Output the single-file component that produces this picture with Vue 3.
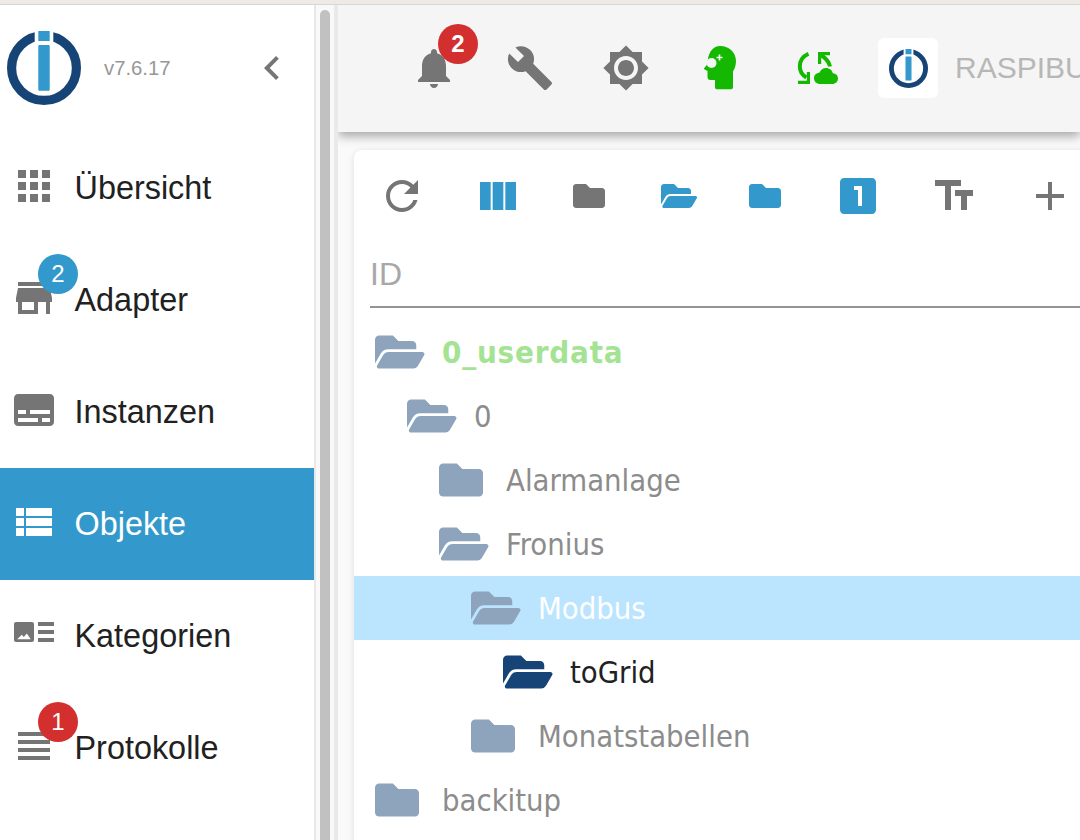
<script setup>
const nav = [
  { label: 'Übersicht', d: 'M4 8h4V4H4v4zm6 12h4v-4h-4v4zm-6 0h4v-4H4v4zm0-6h4v-4H4v4zm6 0h4v-4h-4v4zm6-10v4h4V4h-4zm-6 4h4V4h-4v4zm6 6h4v-4h-4v4zm0 6h4v-4h-4v4z' },
  { label: 'Adapter', badge: '2', tone: 'blue', d: 'M20 4H4v2h16V4zm1 10v-2l-1-5H4l-1 5v2h1v6h10v-6h4v6h2v-6h1zm-9 4H6v-4h6v4z' },
  { label: 'Instanzen', d: 'M20 4H4c-1.1 0-2 .9-2 2v12c0 1.1.9 2 2 2h16c1.1 0 2-.9 2-2V6c0-1.1-.9-2-2-2zM4 12h4v2H4v-2zm10 6H4v-2h10v2zm6 0h-4v-2h4v2zm0-4H10v-2h10v2z' },
  { label: 'Objekte', active: true, d: 'M3 14h4v-4H3v4zm0 5h4v-4H3v4zM3 9h4V5H3v4zm5 5h13v-4H8v4zm0 5h13v-4H8v4zM8 5v4h13V5H8z' },
  { label: 'Kategorien', d: 'M3 6h8a1 1 0 0 1 1 1v8a1 1 0 0 1-1 1H3a1 1 0 0 1-1-1V7a1 1 0 0 1 1-1zm.6 8.6h6.8l-2-2.8-1.5 1.7-1-1.1zM14 6h8v2h-8zm0 4h8v2h-8zm0 4h8v2h-8z' },
  { label: 'Protokolle', badge: '1', tone: 'red', d: 'M4 15h16v-2H4v2zm0 4h16v-2H4v2zm0-8h16V9H4v2zm0-6v2h16V5H4z' },
]
const closed = 'M464 128H272l-64-64H48C21.49 64 0 85.49 0 112v288c0 26.51 21.49 48 48 48h416c26.51 0 48-21.49 48-48V176c0-26.51-21.49-48-48-48z'
const open = 'M572.694 292.093L500.27 416.248A63.997 63.997 0 0 1 444.989 448H45.025c-18.523 0-30.064-20.093-20.731-36.093l72.424-124.155A64 64 0 0 1 152 256h399.964c18.523 0 30.064 20.093 20.73 36.093zM152 224h328v-48c0-26.51-21.49-48-48-48H272l-64-64H48C21.49 64 0 85.49 0 112v278.046l69.077-118.418C86.214 242.25 117.989 224 152 224z'
const tree = [
  { name: '0_userdata', level: 0, open: true, kind: 'root' },
  { name: '0', level: 1, open: true },
  { name: 'Alarmanlage', level: 2 },
  { name: 'Fronius', level: 2, open: true },
  { name: 'Modbus', level: 3, open: true, kind: 'selected' },
  { name: 'toGrid', level: 4, open: true, kind: 'leaf' },
  { name: 'Monatstabellen', level: 3 },
  { name: 'backitup', level: 0 },
]
</script>

<template>
  <div class="screen">
    <div class="strip"></div>
    <div class="main">
      <aside class="sidebar">
        <div class="brand">
          <svg class="logo" viewBox="0 0 74 74">
            <circle cx="37" cy="37" r="32.4" fill="none" stroke="#164477" stroke-width="9.2" />
            <rect x="27.7" y="0" width="18.6" height="14" fill="#fff" />
            <rect x="31.3" y="0" width="11.4" height="10" fill="#3399cc" />
            <rect x="31.3" y="14" width="11.4" height="45.7" rx="1" fill="#3399cc" />
          </svg>
          <span class="version">v7.6.17</span>
          <svg class="chev" viewBox="0 0 24 24"><path d="M15.41 7.41L14 6l-6 6 6 6 1.41-1.41L10.83 12z" /></svg>
        </div>
        <div v-for="item in nav" :key="item.label" class="nav-item" :class="{ active: item.active }">
          <svg class="nav-icon" viewBox="0 0 24 24"><path :d="item.d" /></svg>
          <span class="nav-label">{{ item.label }}</span>
          <span v-if="item.badge" class="badge nav-badge" :class="item.tone">{{ item.badge }}</span>
        </div>
      </aside>
      <div class="track"><div class="thumb"></div></div>
      <div class="divider"></div>
      <div class="content">
        <header class="appbar">
          <div class="bar-btn">
            <svg viewBox="0 0 24 24"><path d="M12 22c1.1 0 2-.9 2-2h-4c0 1.1.89 2 2 2zm6-6v-5c0-3.07-1.64-5.64-4.5-6.32V4c0-.83-.67-1.5-1.5-1.5s-1.5.67-1.5 1.5v.68C7.63 5.36 6 7.92 6 11v5l-2 2v1h16v-1l-2-2z" /></svg>
            <span class="badge bell-badge red">2</span>
          </div>
          <div class="bar-btn">
            <svg viewBox="0 0 24 24"><path d="M22.7 19l-9.1-9.1c.9-2.3.4-5-1.5-6.9-2-2-5-2.4-7.4-1.3L9 6 6 9 1.6 4.7C.4 7.1.9 10.1 2.9 12.1c1.9 1.9 4.6 2.4 6.9 1.5l9.1 9.1c.4.4 1 .4 1.4 0l2.3-2.3c.5-.4.5-1.1.1-1.4z" /></svg>
          </div>
          <div class="bar-btn">
            <svg viewBox="0 0 24 24"><path d="M20 8.69V4h-4.69L12 .69 8.69 4H4v4.69L.69 12 4 15.31V20h4.69L12 23.31 15.31 20H20v-4.69L23.31 12 20 8.69zM12 18c-3.31 0-6-2.69-6-6s2.69-6 6-6 6 2.69 6 6-2.69 6-6 6zm0-10c-2.21 0-4 1.79-4 4s1.79 4 4 4 4-1.79 4-4-1.79-4-4-4z" /></svg>
          </div>
          <div class="bar-btn">
            <svg viewBox="0 0 48 48">
              <path fill="#14b800" d="M22.5 2C31 2 38 8.500 38 17c0 5-1.800 8.500-3 10.500V43c0 1.400-.9 2.300-2.200 2.300H19.200c-1.300 0-2.200-.9-2.200-2.300v-7h-4.500c-2 0-3-1-3-3v-6L6.300 25.300c-.6-.4-.5-1 0-1.400L9.500 20C9.600 9.500 14 2 22.500 2z" />
              <circle cx="13.500" cy="19" r="5" fill="#f5f5f5" />
              <path fill="#f5f5f5" d="M20.700 10.500h1.600v2.200h2.200v1.600h-2.200v2.200h-1.600v-2.200h-2.200v-1.600h2.200z" />
            </svg>
          </div>
          <div class="bar-btn">
            <svg viewBox="0 0 48 48">
              <path fill="none" stroke="#14b800" stroke-width="4" d="M14.500 9.800C8.500 12.500 5.800 17 5.800 22.500c0 4.500 2.400 8.500 6.600 11" />
              <path fill="#14b800" d="M4 40h12V28h-3.200v8.800H4z" />
              <path fill="none" stroke="#14b800" stroke-width="4" d="M26 10.500c5 3 9 6.500 10 12" />
              <path fill="#14b800" d="M24 8h12v3.200h-8.800V20H24z" />
              <path fill="#14b800" d="M26.500 40c-4 0-6.500-2.400-6.500-5.800 0-3.200 2.500-5.500 5.400-5.500 1.300-3 3.600-4.700 6.600-4.700 3.500 0 6.200 2.300 6.900 5.300 3 .2 5.100 2.300 5.100 5.200 0 3-2.600 5.500-5.900 5.500z" />
            </svg>
          </div>
          <div class="host-logo">
            <svg viewBox="0 0 74 74">
              <circle cx="37" cy="37" r="32.4" fill="none" stroke="#164477" stroke-width="9.200" />
              <rect x="27.700" y="0" width="18.600" height="14" fill="#fff" />
              <rect x="31.300" y="0" width="11.400" height="10" fill="#3399cc" />
              <rect x="31.300" y="14" width="11.400" height="45.700" rx="1" fill="#3399cc" />
            </svg>
          </div>
          <span class="host">RASPIBU</span>
        </header>
        <section class="card">
          <div class="tools">
            <svg class="ti t-refresh" viewBox="0 0 24 24"><path d="M17.65 6.35C16.2 4.9 14.21 4 12 4c-4.42 0-7.99 3.58-7.99 8s3.57 8 7.99 8c3.73 0 6.84-2.55 7.73-6h-2.08c-.82 2.33-3.04 4-5.65 4-3.31 0-6-2.69-6-6s2.69-6 6-6c1.66 0 3.14.69 4.22 1.78L13 11h7V4l-2.35 2.35z" /></svg>
            <svg class="ti t-cols blue" viewBox="0 0 24 24"><path d="M14.67 5v14H9.33V5h5.34zm1 14H21V5h-5.33v14zm-7.34 0V5H3v14h5.33z" /></svg>
            <svg class="fa t-fold1" viewBox="0 0 512 512"><path :d="closed" /></svg>
            <svg class="fa t-open blue" viewBox="0 0 576 512"><path :d="open" /></svg>
            <svg class="fa t-fold2 blue" viewBox="0 0 512 512"><path :d="closed" /></svg>
            <svg class="ti t-one blue" viewBox="0 0 24 24"><path d="M19 3H5c-1.1 0-2 .9-2 2v14c0 1.1.9 2 2 2h14c1.100 0 2-.9 2-2V5c0-1.100-.9-2-2-2zm-5 14h-2V9h-2V7h4v10z" /></svg>
            <svg class="ti t-text" viewBox="0 0 24 24"><path d="M2.500 4v3h5v12h3V7h5V4h-13zm19 5h-9v3h3v7h3v-7h3V9z" /></svg>
            <svg class="ti" viewBox="0 0 24 24"><path d="M19 13h-6v6h-2v-6H5v-2h6V5h2v6h6v2z" /></svg>
          </div>
          <div class="id-field">ID</div>
          <div class="tree">
            <div
              v-for="row in tree"
              :key="row.name"
              class="row"
              :class="row.kind"
              :style="{ paddingLeft: 21 + row.level * 32 + 'px' }"
            >
              <span class="folder">
                <svg v-if="row.open" class="f-open" viewBox="0 0 576 512"><path :d="open" /></svg>
                <svg v-else class="f-closed" viewBox="0 0 512 512"><path :d="closed" /></svg>
              </span>
              <span class="name">{{ row.name }}</span>
            </div>
          </div>
        </section>
      </div>
    </div>
  </div>
</template>

<style scoped>
.screen {
  width: 1080px;
  height: 840px;
  overflow: hidden;
  display: flex;
  flex-direction: column;
  background: #fff;
  font-family: "Liberation Sans", Arial, sans-serif;
}
.strip {
  flex: none;
  height: 4px;
  background: #efeae5;
  border-bottom: 1px solid #d6d6d6;
}
.main {
  flex: 1;
  min-height: 0;
  display: flex;
}
.sidebar {
  flex: none;
  width: 314px;
  border-right: 2px solid #e8e8e8;
  background: #fff;
}
.brand {
  height: 127px;
  box-sizing: border-box;
  padding: 0 0 1px 7px;
  display: flex;
  align-items: center;
}
.logo {
  width: 74px;
  height: 74px;
  flex: none;
}
.version {
  margin-left: 23px;
  font-size: 20.3px;
  color: #979797;
}
.chev {
  width: 48px;
  height: 48px;
  margin-left: 77px;
  fill: #757575;
}
.nav-item {
  position: relative;
  height: 112px;
  display: flex;
  align-items: center;
  padding-left: 10px;
  color: #212121;
}
.nav-icon {
  width: 48px;
  height: 48px;
  flex: none;
  margin-bottom: 4px;
  fill: #757575;
}
.nav-label {
  margin-left: 16.5px;
  font-size: 32.4px;
}
.nav-item.active {
  background: #3399cc;
  color: #fff;
}
.nav-item.active .nav-icon {
  fill: #fff;
}
.badge {
  position: absolute;
  width: 40px;
  height: 40px;
  border-radius: 50%;
  display: flex;
  align-items: center;
  justify-content: center;
  color: #fff;
  font-size: 24px;
}
.badge.blue {
  background: #3399cc;
}
.badge.red {
  background: #d32f2f;
}
.nav-badge {
  left: 38px;
  top: 10px;
}
.track {
  flex: none;
  width: 18px;
  background: #f9f9f9;
  padding: 5px 4px 0;
  box-sizing: border-box;
}
.thumb {
  height: 100%;
  background: #c1c1c1;
  border-radius: 6px 6px 0 0;
}
.divider {
  flex: none;
  width: 4px;
  background: #e9e9e9;
}
.content {
  flex: 1;
  min-width: 0;
  background: #fafafa;
  overflow: hidden;
}
.appbar {
  position: relative;
  height: 127px;
  box-sizing: border-box;
  padding: 0 0 1px 48px;
  display: flex;
  align-items: center;
  background: #f5f5f5;
  box-shadow: 0 4px 10px rgba(0, 0, 0, 0.35);
  white-space: nowrap;
}
.bar-btn {
  position: relative;
  flex: none;
  width: 48px;
  height: 48px;
  margin: 0 24px;
}
.bar-btn svg {
  display: block;
  width: 48px;
  height: 48px;
  fill: #757575;
}
.bell-badge {
  left: 28px;
  top: -20px;
  font-weight: 700;
}
.host-logo {
  flex: none;
  width: 60px;
  height: 60px;
  margin-left: 12px;
  border-radius: 6px;
  background: #fff;
  display: flex;
  align-items: center;
  justify-content: center;
}
.host-logo svg {
  width: 39px;
  height: 39px;
}
.host {
  flex: none;
  margin-left: 17px;
  font-size: 30px;
  color: #b7b7b7;
}
.card {
  margin: 18px 0 0 16px;
  width: 760px;
  height: 720px;
  border-radius: 8px 0 0 0;
  background: #fff;
  box-shadow: 0 1px 6px rgba(0, 0, 0, 0.12);
}
.tools {
  height: 48px;
  padding: 22px 0 0 24px;
  display: flex;
  align-items: center;
}
.tools svg {
  flex: none;
  fill: #757575;
}
.tools svg.blue {
  fill: #3399cc;
}
.ti {
  width: 48px;
  height: 48px;
}
.fa {
  height: 32px;
}
.t-refresh,
.t-one,
.t-text {
  margin-right: 48px;
}
.t-cols {
  margin-right: 51px;
}
.t-fold1 {
  width: 32px;
  margin-right: 56px;
}
.t-open {
  width: 36px;
  margin-right: 52px;
}
.t-fold2 {
  width: 32px;
  margin-right: 53px;
}
.id-field {
  height: 88px;
  margin-left: 16px;
  padding-top: 28px;
  box-sizing: border-box;
  border-bottom: 2px solid #949494;
  font-size: 32px;
  line-height: 52px;
  color: #a8a8a8;
}
.tree {
  padding-top: 12px;
}
.row {
  height: 64px;
  display: flex;
  align-items: center;
  font-family: "DejaVu Sans", sans-serif;
  font-stretch: condensed;
  font-size: 30.7px;
  color: #8c8c8c;
}
.folder {
  flex: none;
  width: 67px;
  height: 44px;
}
.folder svg {
  display: block;
  height: 44px;
  fill: #8ea3bc;
}
.f-open {
  width: 49.500px;
}
.f-closed {
  width: 44px;
}
.row.root {
  color: #a4e394;
  font-weight: 700;
  font-size: 31px;
  letter-spacing: 0.8px;
}
.row.selected {
  background: #bbe5ff;
  color: #fff;
}
.row.leaf {
  color: #212121;
}
.row.leaf .folder svg {
  fill: #164477;
}
</style>
